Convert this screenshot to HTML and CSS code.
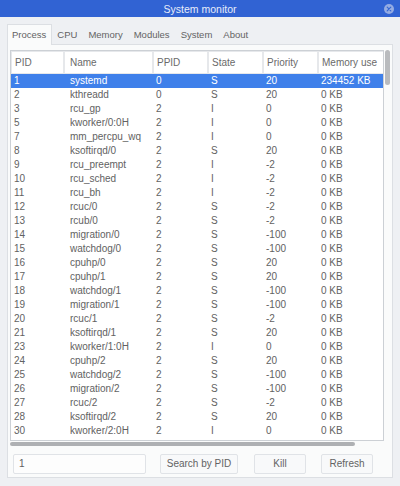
FILE: index.html
```html
<!DOCTYPE html>
<html>
<head>
<meta charset="utf-8">
<title>System monitor</title>
<link rel="stylesheet" href="styles.css">
</head>
<body>
<div class="window">
  <div class="titlebar">
    <span></span>
    <span class="title">System monitor</span>
    <span class="close">
      <svg width="10" height="10" viewBox="0 0 10 10"><circle cx="5" cy="5" r="5" fill="#95ace3"/><path d="M3.2 3.2 L6.8 6.8 M6.8 3.2 L3.2 6.8" stroke="#3466d4" stroke-width="1.2" stroke-linecap="round"/></svg>
    </span>
  </div>
  <div class="main">
    <div class="tabs">
      <div class="tab active">Process</div>
      <div class="tab">CPU</div>
      <div class="tab">Memory</div>
      <div class="tab">Modules</div>
      <div class="tab">System</div>
      <div class="tab">About</div>
    </div>
    <div class="pane">
      <div class="tablearea">
        <div class="viewport">
          <div class="header">
            <div class="th">PID</div><div class="th name">Name</div><div class="th">PPID</div><div class="th">State</div><div class="th">Priority</div><div class="th">Memory use</div>
          </div>
          <div class="row selected"><span>1</span><span class="name">systemd</span><span>0</span><span>S</span><span>20</span><span>234452 KB</span></div>
          <div class="row"><span>2</span><span class="name">kthreadd</span><span>0</span><span>S</span><span>20</span><span>0 KB</span></div>
          <div class="row"><span>3</span><span class="name">rcu_gp</span><span>2</span><span>I</span><span>0</span><span>0 KB</span></div>
          <div class="row"><span>5</span><span class="name">kworker/0:0H</span><span>2</span><span>I</span><span>0</span><span>0 KB</span></div>
          <div class="row"><span>7</span><span class="name">mm_percpu_wq</span><span>2</span><span>I</span><span>0</span><span>0 KB</span></div>
          <div class="row"><span>8</span><span class="name">ksoftirqd/0</span><span>2</span><span>S</span><span>20</span><span>0 KB</span></div>
          <div class="row"><span>9</span><span class="name">rcu_preempt</span><span>2</span><span>I</span><span>-2</span><span>0 KB</span></div>
          <div class="row"><span>10</span><span class="name">rcu_sched</span><span>2</span><span>I</span><span>-2</span><span>0 KB</span></div>
          <div class="row"><span>11</span><span class="name">rcu_bh</span><span>2</span><span>I</span><span>-2</span><span>0 KB</span></div>
          <div class="row"><span>12</span><span class="name">rcuc/0</span><span>2</span><span>S</span><span>-2</span><span>0 KB</span></div>
          <div class="row"><span>13</span><span class="name">rcub/0</span><span>2</span><span>S</span><span>-2</span><span>0 KB</span></div>
          <div class="row"><span>14</span><span class="name">migration/0</span><span>2</span><span>S</span><span>-100</span><span>0 KB</span></div>
          <div class="row"><span>15</span><span class="name">watchdog/0</span><span>2</span><span>S</span><span>-100</span><span>0 KB</span></div>
          <div class="row"><span>16</span><span class="name">cpuhp/0</span><span>2</span><span>S</span><span>20</span><span>0 KB</span></div>
          <div class="row"><span>17</span><span class="name">cpuhp/1</span><span>2</span><span>S</span><span>20</span><span>0 KB</span></div>
          <div class="row"><span>18</span><span class="name">watchdog/1</span><span>2</span><span>S</span><span>-100</span><span>0 KB</span></div>
          <div class="row"><span>19</span><span class="name">migration/1</span><span>2</span><span>S</span><span>-100</span><span>0 KB</span></div>
          <div class="row"><span>20</span><span class="name">rcuc/1</span><span>2</span><span>S</span><span>-2</span><span>0 KB</span></div>
          <div class="row"><span>21</span><span class="name">ksoftirqd/1</span><span>2</span><span>S</span><span>20</span><span>0 KB</span></div>
          <div class="row"><span>23</span><span class="name">kworker/1:0H</span><span>2</span><span>I</span><span>0</span><span>0 KB</span></div>
          <div class="row"><span>24</span><span class="name">cpuhp/2</span><span>2</span><span>S</span><span>20</span><span>0 KB</span></div>
          <div class="row"><span>25</span><span class="name">watchdog/2</span><span>2</span><span>S</span><span>-100</span><span>0 KB</span></div>
          <div class="row"><span>26</span><span class="name">migration/2</span><span>2</span><span>S</span><span>-100</span><span>0 KB</span></div>
          <div class="row"><span>27</span><span class="name">rcuc/2</span><span>2</span><span>S</span><span>-2</span><span>0 KB</span></div>
          <div class="row"><span>28</span><span class="name">ksoftirqd/2</span><span>2</span><span>S</span><span>20</span><span>0 KB</span></div>
          <div class="row"><span>30</span><span class="name">kworker/2:0H</span><span>2</span><span>I</span><span>0</span><span>0 KB</span></div>
        </div>
        <div class="vscroll"><div class="vthumb"></div></div>
        <div class="hscroll"><div class="hthumb"></div></div>
      </div>
      <div class="controls">
        <div class="input">1</div>
        <div class="btn btn-search">Search by PID</div>
        <div class="btn btn-kill">Kill</div>
        <div class="btn btn-refresh">Refresh</div>
      </div>
    </div>
  </div>
</div>
</body>
</html>
```
FILE: styles.css
```css
* { box-sizing: border-box; }
html, body {
  margin: 0;
  padding: 0;
}
body {
  width: 400px;
  height: 486px;
  background: #eef0f3;
  font-family: "Liberation Sans", Arial, sans-serif;
  font-size: 10px;
  color: #5f5f5f;
  overflow: hidden;
}
.window {
  display: flex;
  flex-direction: column;
  height: 486px;
}
.titlebar {
  height: 17px;
  background: #3163d3;
  display: grid;
  grid-template-columns: 1fr auto 1fr;
  align-items: center;
}
.title {
  color: #e6ecfa;
  font-size: 10.5px;
}
.close {
  justify-self: end;
  margin-right: 6px;
  display: flex;
}
.main {
  padding: 7px 7px 8px 7px;
  display: flex;
  flex-direction: column;
}
.tabs {
  display: flex;
  height: 20px;
  position: relative;
  z-index: 1;
}
.tab {
  padding: 0 5px 0 4px;
  line-height: 20px;
  font-size: 9.5px;
  border: 1px solid transparent;
  border-bottom: none;
  color: #636363;
}
.tab.active {
  background: #fafbfb;
  border-color: #dcdfe3;
  height: 21px;
}
.pane {
  border: 1px solid #dcdfe3;
  background: #fafbfb;
  padding: 5px 0 3px 2px;
  height: 434px;
}
.tablearea {
  display: grid;
  grid-template-columns: 374px 8px;
  grid-template-rows: 391px 6px;
}
.viewport {
  border: 1px solid #ccd0d5;
  background: #fff;
  overflow: hidden;
}
.header {
  display: grid;
  grid-template-columns: 53px 89px 55px 55px 55px 110px;
  height: 23px;
}
.th {
  border: 1px solid #e6e8eb;
  padding-left: 3px;
  line-height: 21px;
  color: #6a6a6a;
  background: #fff;
  white-space: nowrap;
}
.th.name { padding-left: 5px; }
.row {
  display: grid;
  grid-template-columns: 53px 89px 55px 55px 55px 110px;
  height: 14px;
  line-height: 14px;
  color: #626262;
  white-space: nowrap;
}
.row span { padding-left: 3px; }
.row span.name { padding-left: 6px; }
.row.selected {
  background: #3f80ea;
  color: #fff;
}
.vscroll {
  padding-left: 1px;
}
.vthumb {
  width: 5px;
  height: 35px;
  background: #b9bbbe;
  border-radius: 3px;
}
.hscroll {
  padding-top: 1px;
}
.hthumb {
  width: 345px;
  height: 4px;
  background: #aeb0b3;
  border-radius: 2px;
}
.controls {
  display: flex;
  height: 20px;
  margin-top: 7px;
  padding-left: 3px;
}
.input {
  width: 133px;
  height: 20px;
  border: 1px solid #e0e3e7;
  border-radius: 2px;
  background: #fdfdfd;
  line-height: 18px;
  padding-left: 5px;
  color: #5f5f5f;
}
.btn {
  height: 20px;
  border: 1px solid #e0e3e7;
  border-radius: 2px;
  background: #f8f9fa;
  line-height: 18px;
  text-align: center;
  color: #636363;
}
.btn-search { margin-left: 14px; width: 78px; }
.btn-kill { margin-left: 16px; width: 52px; }
.btn-refresh { margin-left: 15px; width: 52px; }
```
